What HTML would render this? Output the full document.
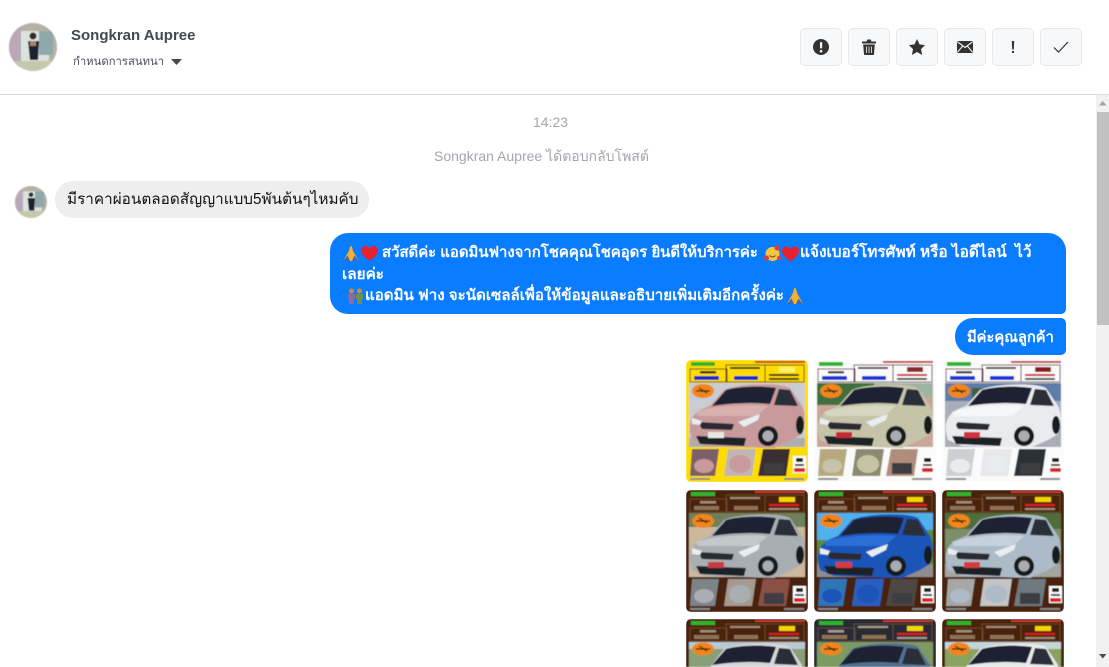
<!DOCTYPE html>
<html><head><meta charset="utf-8">
<style>
html,body{margin:0;padding:0;width:1109px;height:667px;overflow:hidden;background:#fff;font-family:"Liberation Sans","Noto Sans CJK SC",sans-serif}
#w{position:relative;width:1109px;height:667px;overflow:hidden;background:#fff}
.a{position:absolute;white-space:nowrap}
.btn{position:absolute;top:28px;width:40px;height:36px;background:#f7f8fa;border:1px solid #e6e7eb;border-radius:5px}
.btn svg{position:absolute;left:0;top:0;width:40px;height:36px}
.tile{position:absolute;width:122px;height:122px;border-radius:5px;overflow:hidden}
.tile svg{display:block;width:122px;height:122px}
.tile.s{height:48px;border-radius:5px 5px 0 0}
.tile.s svg{height:48px}
.l{line-height:22px;color:#fff;height:22px;font-weight:bold}
.e{position:absolute}
</style></head>
<body>
<div id="w">
<svg width="0" height="0" style="position:absolute">
<defs>
<filter id="b"><feGaussianBlur stdDeviation="0.6"/></filter>
<symbol id="head" viewBox="0 0 122 122">
<rect width="122" height="122" fill="var(--bg)"/>
<rect x="5" y="2" width="24" height="4" fill="#2fb52f"/>
<rect x="69" y="1" width="50" height="2" fill="#c8382f"/>
<g fill="none" stroke="var(--ln)" stroke-width="1">
<rect x="4" y="9" width="37" height="13"/><rect x="40" y="5" width="39" height="17"/><rect x="79" y="5" width="39" height="17"/>
</g>
<rect x="44" y="7" width="30" height="2" fill="var(--tx)"/>
<rect x="14" y="11" width="16" height="2.500" fill="var(--tx)"/>
<rect x="8" y="16" width="25" height="4" fill="var(--pr)"/>
<rect x="48" y="16" width="24" height="4" fill="var(--pr)"/>
<rect x="93" y="7" width="16" height="5" fill="var(--pz)"/>
<rect x="83" y="14" width="30" height="2" fill="var(--tx2)"/><rect x="83" y="18" width="30" height="2" fill="var(--tx)"/>
</symbol>
<symbol id="head48" viewBox="0 0 122 48">
<rect width="122" height="48" fill="var(--bg)"/>
<rect x="5" y="2" width="24" height="4" fill="#2fb52f"/>
<rect x="69" y="1" width="50" height="2" fill="#c8382f"/>
<g fill="none" stroke="var(--ln)" stroke-width="1">
<rect x="4" y="9" width="37" height="13"/><rect x="40" y="5" width="39" height="17"/><rect x="79" y="5" width="39" height="17"/>
</g>
<rect x="44" y="7" width="30" height="2" fill="var(--tx)"/>
<rect x="14" y="11" width="16" height="2.500" fill="var(--tx)"/>
<rect x="8" y="16" width="25" height="4" fill="var(--pr)"/>
<rect x="48" y="16" width="24" height="4" fill="var(--pr)"/>
<rect x="93" y="7" width="16" height="5" fill="var(--pz)"/>
<rect x="83" y="14" width="30" height="2" fill="var(--tx2)"/><rect x="83" y="18" width="30" height="2" fill="var(--tx)"/>
<rect x="3" y="23" width="116" height="25" fill="var(--ph)"/>
<rect x="3" y="23" width="116" height="7" fill="var(--sky)"/>
<path d="M24 48L38 30C50 24 92 22 104 28L116 46V48Z" fill="var(--car)"/>
<path d="M26 46L40 30C55 26 78 26 90 28L84 44C65 42 45 43 26 46Z" fill="#1c2330"/>
<path d="M93 29L104 30 112 46 88 45Z" fill="#2a2f38"/>
<ellipse cx="17" cy="30" rx="11" ry="6.500" fill="#f0861a"/>
<path d="M10 30h14M13 27l8 5" stroke="#3b2407" stroke-width="1.200"/>
</symbol>
<symbol id="foot" viewBox="0 0 122 122">
<rect x="107" y="96" width="13" height="17" fill="#fff"/>
<rect x="110" y="98" width="7" height="4" fill="#222"/><rect x="109" y="104" width="9" height="2" fill="#333"/><rect x="108" y="108" width="11" height="4" fill="#d9252a"/>
<rect x="4" y="118" width="20" height="2" fill="#8a8a8a"/><rect x="98" y="118" width="20" height="2" fill="#888"/>
<ellipse cx="17" cy="31" rx="11" ry="7" fill="#f0861a"/><path d="M10 31h14M13 28l8 5" stroke="#3b2407" stroke-width="1.200"/>
</symbol>
<symbol id="car" viewBox="0 0 122 122">
<path d="M4 72C3 60 6 52 24 46L38 30C50 24 92 22 104 28L116 46C120 54 119 66 116 74L106 80 88 88 20 86 6 80Z" fill="var(--car)"/>
<path d="M26 46L40 30C55 26 78 26 90 28L84 44C65 42 45 43 26 46Z" fill="#1c2330"/>
<path d="M93 29L104 30 112 46 88 45Z" fill="#2a2f38"/>
<path d="M10 52C25 46 60 44 82 46L70 56 12 56Z" fill="var(--carl)"/>
<path d="M12 62L48 64 46 70 16 69Z" fill="#2a2c32"/>
<path d="M10 76L60 78 58 86 14 84Z" fill="#1f2126"/>
<path d="M6 58L16 61 14 65 6 64ZM52 62L74 54 72 60 58 67Z" fill="#e8edf0"/>
<rect x="22" y="72" width="16" height="6" fill="var(--pl)"/>
<circle cx="82" cy="76" r="10" fill="#191a1e"/><circle cx="82" cy="76" r="5.500" fill="#a9adb2"/>
<ellipse cx="114" cy="65" rx="4" ry="9" fill="#191a1e"/>
</symbol>
<symbol id="thumbs" viewBox="0 0 122 122">
<path d="M6 89H33L29 116H4Z" fill="var(--t1)"/><path d="M42 89H70L66 116H38Z" fill="var(--t2)"/><path d="M77 89H104L100 116H72Z" fill="var(--t3)"/>
<ellipse cx="18" cy="106" rx="10" ry="7" fill="var(--car)"/><ellipse cx="54" cy="104" rx="11" ry="9" fill="var(--car)"/><rect x="78" y="103" width="20" height="11" fill="#3e3c42"/>
</symbol>
</defs>
</svg>

<!-- header -->
<svg class="a" style="left:9px;top:23px" width="48" height="48" viewBox="0 0 48 48" filter="url(#b)">
<defs><clipPath id="av"><circle cx="24" cy="24" r="24"/></clipPath></defs>
<g clip-path="url(#av)"><rect width="48" height="48" fill="#b5b1a4"/><rect x="0" width="12" height="48" fill="#b8a8b8"/><rect x="12" y="8" width="28" height="30" fill="#dde3dc"/><rect x="30" y="8" width="14" height="24" fill="#8fa8ab"/><rect y="38" width="48" height="10" fill="#c4c8ad"/><circle cx="24" cy="13" r="3.500" fill="#302a2a"/><path d="M19 18H30L29 37H21Z" fill="#1f2230"/><path d="M21 18h6v5h-6z" fill="#a78568"/></g>
</svg>
<div class="a" style="left:71px;top:26px;font-size:15px;line-height:20px;font-weight:bold;color:#444950">Songkran Aupree</div>
<div class="a" style="left:73px;top:54px;font-size:11.300px;line-height:17px;color:#4b4f56">กำหนดการสนทนา</div>
<svg class="a" style="left:171px;top:59px" width="11" height="7"><path d="M0 0H11L5.500 6Z" fill="#444950"/></svg>

<div class="btn" style="left:800px"><svg viewBox="0 0 40 36"><circle cx="20" cy="18" r="8" fill="#333"/><rect x="19" y="13" width="2.200" height="6.500" rx="1" fill="#f7f8fa"/><circle cx="20.100" cy="22.200" r="1.300" fill="#f7f8fa"/></svg></div>
<div class="btn" style="left:848px"><svg viewBox="0 0 40 36"><path d="M13 12.500H27V14.500H13ZM17.500 12.500L18.300 10.500H21.700L22.500 12.500Z" fill="#333"/><path d="M14.200 15.500H25.800L25 25.200C24.900 25.800 24.600 26 24 26H16C15.400 26 15.100 25.800 15 25.200Z" fill="#333"/><path d="M17.600 17.500V24M20 17.500V24M22.400 17.500V24" stroke="#f7f8fa" stroke-width=".8"/></svg></div>
<div class="btn" style="left:896px"><svg viewBox="0 0 40 36"><path d="M20 10L22.500 15.400 28 16.100 24 20.100 25.100 26 20 23 14.900 26 16 20.100 12 16.100 17.500 15.400Z" fill="#333"/></svg></div>
<div class="btn" style="left:944px"><svg viewBox="0 0 40 36"><rect x="12" y="12" width="16" height="12" rx="1" fill="#333"/><path d="M12.500 12.800L20 18.500 27.500 12.800M12.500 23.200L17.500 17.200M27.500 23.200L22.500 17.200" fill="none" stroke="#f7f8fa" stroke-width="1.100"/></svg></div>
<div class="btn" style="left:992px"><svg viewBox="0 0 40 36"><path d="M18.800 12H21.200L20.800 20.500H19.200Z" fill="#333"/><rect x="19" y="22" width="2" height="2" fill="#333"/></svg></div>
<div class="btn" style="left:1040px"><svg viewBox="0 0 40 36"><path d="M13 18.500L17.500 23 27 13" fill="none" stroke="#333" stroke-width="1.200"/></svg></div>

<div class="a" style="left:0;top:94px;width:1109px;height:1px;background:#dcdcdf"></div>

<!-- scrollbar -->
<div class="a" style="left:1096px;top:95px;width:13px;height:572px;background:#f1f1f1"></div>
<div class="a" style="left:1097px;top:112px;width:12px;height:213px;background:#c1c1c1"></div>
<svg class="a" style="left:1099px;top:101px" width="8" height="5"><path d="M0 4.500H7.500L3.750 0Z" fill="#a3a3a3"/></svg>
<svg class="a" style="left:1099px;top:654px" width="8" height="5"><path d="M0 0H7.500L3.750 4.500Z" fill="#505050"/></svg>

<!-- messages -->
<div class="a" style="left:533px;top:114px;font-size:14px;line-height:16px;color:#a3a6ab">14:23</div>
<div class="a" style="left:434px;top:148px;font-size:14px;line-height:16px;color:#a3a6ab">Songkran Aupree ได้ตอบกลับโพสต์</div>

<svg class="a" style="left:15px;top:186px" width="32" height="32" viewBox="0 0 48 48" filter="url(#b)">
<g clip-path="url(#av)"><rect width="48" height="48" fill="#b5b1a4"/><rect x="0" width="12" height="48" fill="#b8a8b8"/><rect x="12" y="8" width="28" height="30" fill="#dde3dc"/><rect x="30" y="8" width="14" height="24" fill="#8fa8ab"/><rect y="38" width="48" height="10" fill="#c4c8ad"/><circle cx="24" cy="13" r="3.500" fill="#302a2a"/><path d="M19 18H30L29 37H21Z" fill="#1f2230"/></g>
</svg>
<div class="a" style="left:55px;top:181px;width:314px;height:37px;border-radius:18px;background:#eee"></div>
<div class="a" style="left:67px;top:189px;font-size:15.300px;line-height:22px;color:#111">มีราคาผ่อนตลอดสัญญาแบบ5พันต้นๆไหมคับ</div>

<div class="a" style="left:330px;top:233px;width:736px;height:81px;background:#0a7cff;border-radius:18px 18px 5px 18px"></div>
<svg class="e" style="left:343px;top:245px" width="36" height="17" viewBox="0 0 36 17">
<path d="M8 1C9 1 9.500 3 10 6L16 16H0L6 6C6.500 3 7 1 8 1Z" fill="#f6ae2d"/><path d="M0 16L4.500 10.500 7 16ZM16 16L11.500 10.500 9 16Z" fill="#3a6cb0"/>
<path d="M26.500 16C24 14 18 10 18 5.500C18 2.500 20 1 22.200 1C24 1 25.600 2 26.500 3.500C27.400 2 29 1 30.800 1C33 1 35 2.500 35 5.500C35 10 29 14 26.500 16Z" fill="#e8202f"/></svg>
<div class="a l" style="left:382px;top:242px;font-size:14.900px">สวัสดีค่ะ แอดมินฟางจากโชคคุณโชคอุดร ยินดีให้บริการค่ะ</div>
<svg class="e" style="left:764px;top:245px" width="36" height="17" viewBox="0 0 36 17">
<circle cx="8.500" cy="9" r="7" fill="#f8c440"/><circle cx="2.500" cy="13" r="2.500" fill="#e23b3b"/><circle cx="13" cy="3" r="2.500" fill="#e23b3b"/><circle cx="15" cy="13" r="2" fill="#e23b3b"/><path d="M5.500 10.500C7.500 12.500 9.500 12.500 11.500 10.500" stroke="#7b3f14" fill="none"/>
<path d="M26.500 16.500C24 14.500 18 10.500 18 6C18 3 20 1.500 22.200 1.500C24 1.500 25.600 2.500 26.500 4C27.400 2.500 29 1.500 30.800 1.500C33 1.500 35 3 35 6C35 10.500 29 14.500 26.500 16.500Z" fill="#e8202f"/></svg>
<div class="a l" style="left:800px;top:242px;font-size:15.400px">แจ้งเบอร์โทรศัพท์ หรือ ไอดีไลน์&nbsp; ไว้</div>
<div class="a l" style="left:342px;top:264px;font-size:15.300px">เลยค่ะ</div>
<svg class="e" style="left:347px;top:288px" width="17" height="16" viewBox="0 0 17 16">
<circle cx="4.500" cy="3" r="2.600" fill="#c98a3c"/><circle cx="12.500" cy="3" r="2.600" fill="#c98a3c"/><path d="M1 6H8V11H7V16H2V11H1Z" fill="#8a6aa8"/><path d="M9 6H16V11H15V16H10V11H9Z" fill="#6f8f4f"/></svg>
<div class="a l" style="left:365px;top:285px;font-size:15.100px">แอดมิน ฟาง จะนัดเซลล์เพื่อให้ข้อมูลและอธิบายเพิ่มเติมอีกครั้งค่ะ</div>
<svg class="e" style="left:787px;top:288px" width="16" height="16" viewBox="0 0 16 16">
<path d="M8 0C9 0 9.500 2 10 5L16 16H0L6 5C6.500 2 7 0 8 0Z" fill="#f6ae2d"/><path d="M0 16L4.500 10.500 7 16ZM16 16L11.500 10.500 9 16Z" fill="#3a6cb0"/></svg>

<div class="a" style="left:955px;top:318px;width:111px;height:37px;background:#0a7cff;border-radius:18px 5px 5px 18px"></div>
<div class="a l" style="left:967px;top:327px;font-size:14.700px">มีค่ะคุณลูกค้า</div>

<!-- tiles row 1 -->
<div class="tile" style="left:686px;top:360px;--bg:#ffdc00;--ln:#5b3a20;--tx:#3a2b15;--tx2:#2a2a2a;--pr:#1c2bd0;--pz:#fff069;--car:#c99a9b;--carl:#d8b1ae;--pl:#e9e7e2;--t1:#7b6065;--t2:#c2b6b4;--t3:#3b2e33"><svg viewBox="0 0 122 122" filter="url(#b)"><use href="#head"/><rect x="3" y="23" width="116" height="64" fill="#c9ccd2"/><rect x="3" y="78" width="116" height="9" fill="#aeaeb0"/><use href="#car"/><use href="#thumbs"/><use href="#foot"/></svg></div>
<div class="tile" style="left:814px;top:360px;--bg:#fafafa;--ln:#6a3a3a;--tx:#444;--tx2:#c9242a;--pr:#1c34d8;--pz:#8a2a2a;--car:#c5c3a8;--carl:#d7d6c0;--pl:#c42a36;--t1:#b7a97e;--t2:#8d8a70;--t3:#b08d7a"><svg viewBox="0 0 122 122" filter="url(#b)"><use href="#head"/><rect x="3" y="23" width="116" height="64" fill="#c9a698"/><rect x="3" y="23" width="60" height="22" fill="#3f7040"/><rect x="60" y="23" width="59" height="14" fill="#9fb3a4"/><use href="#car"/><use href="#thumbs"/><use href="#foot"/></svg></div>
<div class="tile" style="left:942px;top:360px;--bg:#fafafa;--ln:#6a3a3a;--tx:#444;--tx2:#c9242a;--pr:#1c34d8;--pz:#8a1a1a;--car:#e9ebee;--carl:#f6f7f8;--pl:#d2323c;--t1:#ccd0d4;--t2:#e8e8ea;--t3:#2a3138"><svg viewBox="0 0 122 122" filter="url(#b)"><use href="#head"/><rect x="3" y="23" width="116" height="64" fill="#a9adb8"/><rect x="3" y="23" width="116" height="18" fill="#5d7da8"/><rect x="30" y="28" width="40" height="12" fill="#3f5f3a"/><use href="#car"/><use href="#thumbs"/><use href="#foot"/></svg></div>

<!-- tiles row 2 -->
<div class="tile" style="left:686px;top:490px;--bg:#4a2410;--ln:#6d4528;--tx:#a08b75;--tx2:#e21f1f;--pr:#8c7352;--pz:#f5d400;--car:#a9aeb3;--carl:#c4c8cb;--pl:#c73a40;--t1:#7d8488;--t2:#a59990;--t3:#8a4f45"><svg viewBox="0 0 122 122" filter="url(#b)"><use href="#head"/><rect x="3" y="23" width="116" height="64" fill="#cdb79d"/><rect x="3" y="23" width="116" height="14" fill="#70805a"/><use href="#car"/><use href="#thumbs"/><use href="#foot"/></svg></div>
<div class="tile" style="left:814px;top:490px;--bg:#4a2410;--ln:#6d4528;--tx:#a08b75;--tx2:#e21f1f;--pr:#8c7352;--pz:#f5d400;--car:#1f55b8;--carl:#2a70d8;--pl:#d33a40;--t1:#2d74b8;--t2:#2a5fc0;--t3:#4f4642"><svg viewBox="0 0 122 122" filter="url(#b)"><use href="#head"/><rect x="3" y="23" width="116" height="64" fill="#4fb0ea"/><rect x="3" y="74" width="116" height="13" fill="#8d8d90"/><rect x="3" y="50" width="14" height="24" fill="#5b8a3a"/><rect x="105" y="40" width="14" height="34" fill="#5b8a3a"/><use href="#car"/><use href="#thumbs"/><use href="#foot"/></svg></div>
<div class="tile" style="left:942px;top:490px;--bg:#4a2410;--ln:#6d4528;--tx:#a08b75;--tx2:#e21f1f;--pr:#8c7352;--pz:#f5d400;--car:#adbbc9;--carl:#c5d1dc;--pl:#d33a40;--t1:#a5a8a6;--t2:#c5c6c4;--t3:#6d7a80"><svg viewBox="0 0 122 122" filter="url(#b)"><use href="#head"/><rect x="3" y="23" width="116" height="64" fill="#7d8f68"/><rect x="3" y="74" width="116" height="13" fill="#a5a5a0"/><rect x="3" y="23" width="116" height="16" fill="#4f6d3a"/><use href="#car"/><use href="#thumbs"/><use href="#foot"/></svg></div>

<!-- tiles row 3 (cropped at the viewport edge) -->
<div class="tile s" style="left:686px;top:619px;--bg:#4a2410;--ln:#6d4528;--tx:#a08b75;--tx2:#e21f1f;--pr:#8c7352;--pz:#f5d400;--car:#d5d6d8;--ph:#88a07a;--sky:#b9c8d4"><svg viewBox="0 0 122 48" filter="url(#b)"><use href="#head48" width="122" height="48"/></svg></div>
<div class="tile s" style="left:814px;top:619px;--bg:#2c2a30;--ln:#5d4a45;--tx:#a09a90;--tx2:#e21f1f;--pr:#8c7352;--pz:#f5d400;--car:#53718f;--ph:#7d9a64;--sky:#7d9a64"><svg viewBox="0 0 122 48" filter="url(#b)"><use href="#head48" width="122" height="48"/></svg></div>
<div class="tile s" style="left:942px;top:619px;--bg:#4a2410;--ln:#6d4528;--tx:#a08b75;--tx2:#e21f1f;--pr:#8c7352;--pz:#f5d400;--car:#e8e9ea;--ph:#8aa260;--sky:#c5d3db"><svg viewBox="0 0 122 48" filter="url(#b)"><use href="#head48" width="122" height="48"/></svg></div>
</div>
</body></html>
